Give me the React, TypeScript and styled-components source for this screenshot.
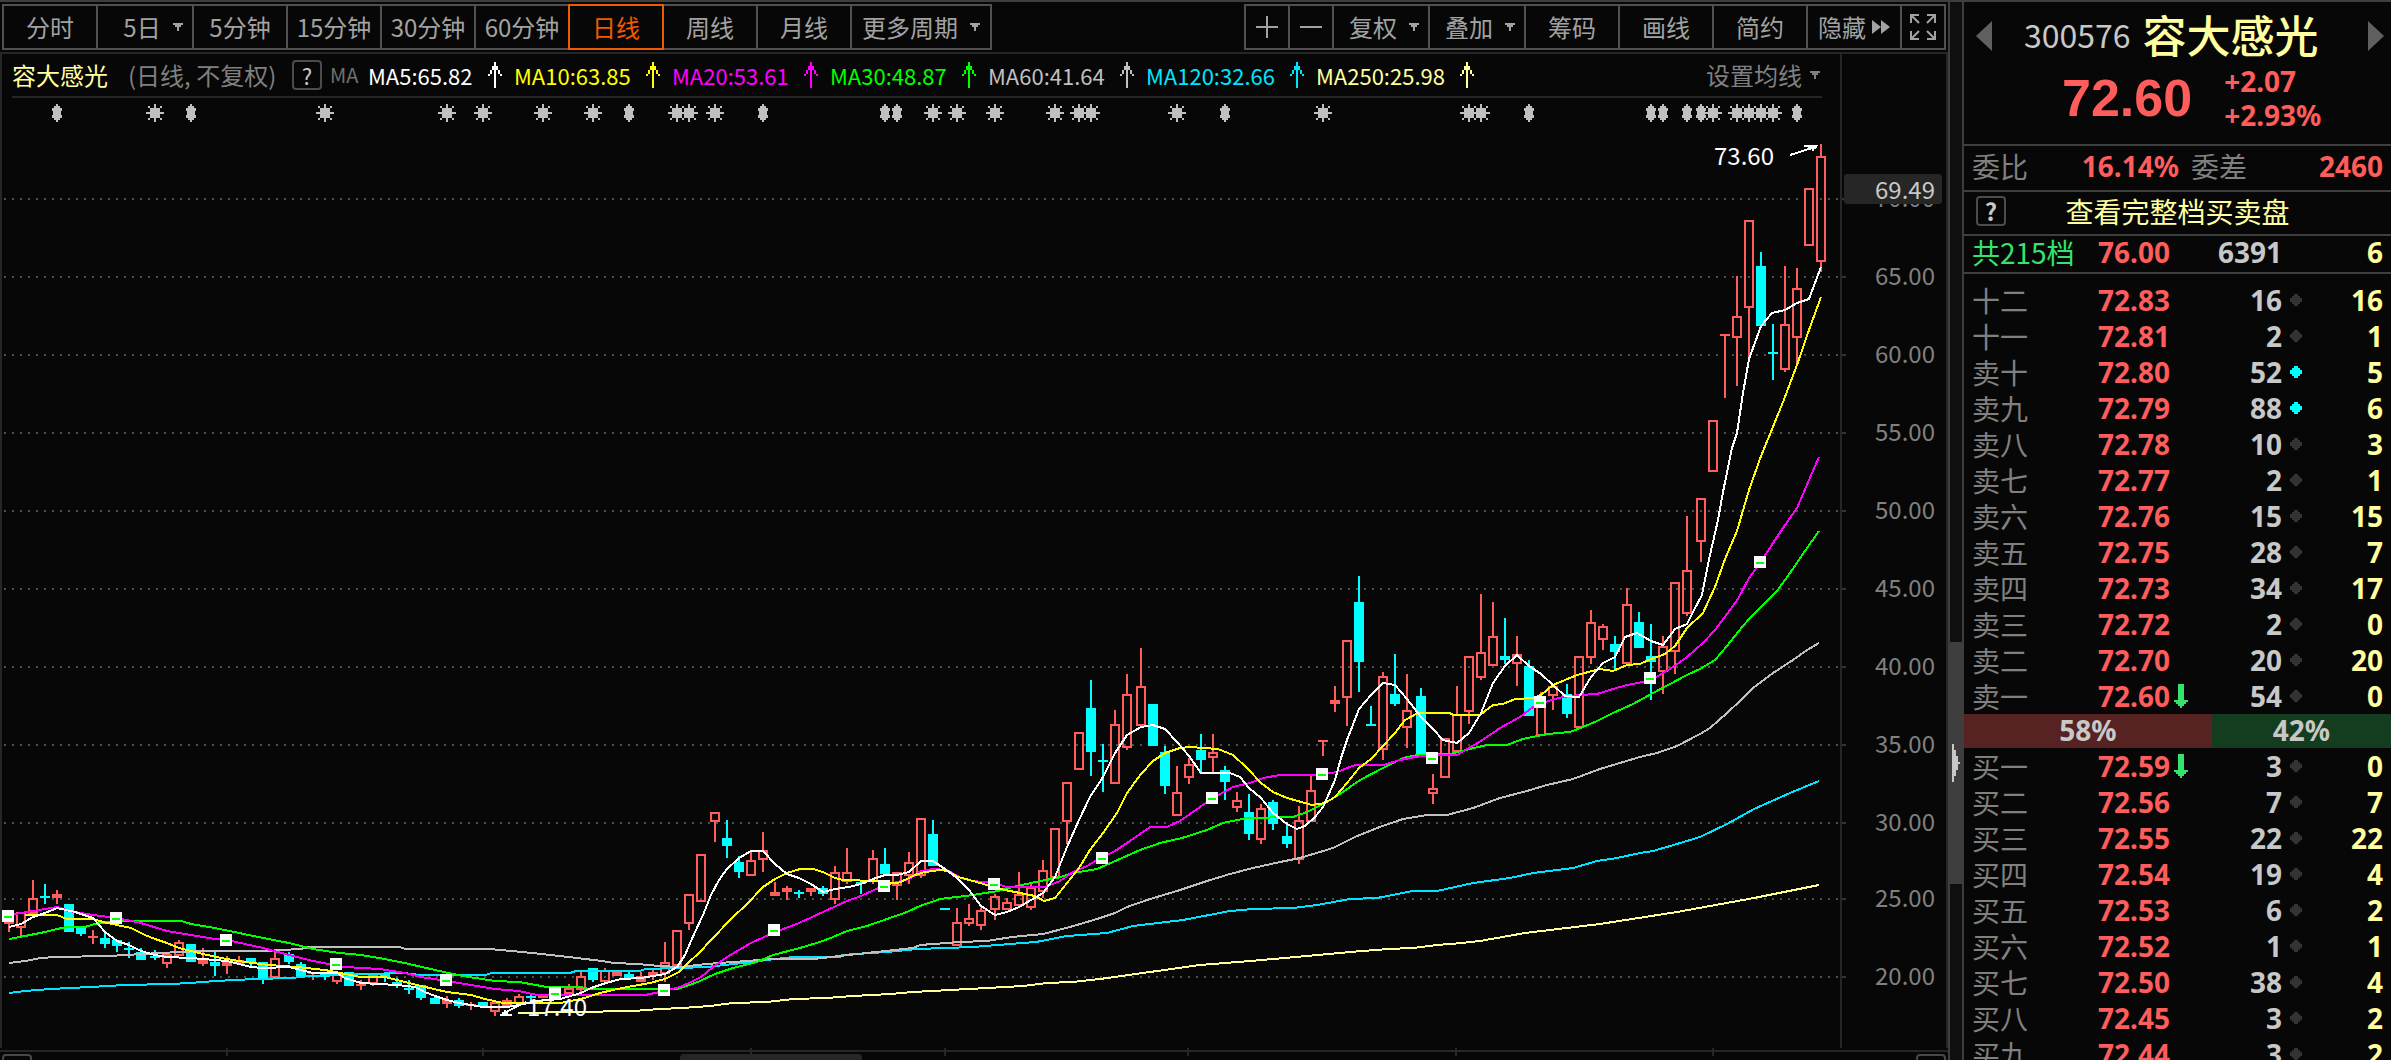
import React from "react";
import styled, { createGlobalStyle } from "styled-components";

const color = {
  bg: "#070707",
  line: "#3e3e3e",
  faint: "#262626",
  border: "#505050",
  text: "#a2a2a2",
  muted: "#808080",
  bright: "#c8c8c8",
  accent: "#f05a00",
  red: "#ff5c5c",
  green: "#35e36b",
  cyan: "#00ffff",
  pale: "#ffffa0",
};

const GlobalStyle = createGlobalStyle`
  *, *::before, *::after { box-sizing: border-box; }
  body {
    margin: 0;
    background: ${color.bg};
    color: ${color.text};
    font-family: "Noto Sans CJK SC", "Liberation Sans", sans-serif;
    font-size: 24px;
    line-height: 32px;
  }
  button { font: inherit; color: inherit; background: none; padding: 0; margin: 0; border: 0; cursor: pointer; }
  svg { display: block; }
`;

/* ---------- layout ---------- */

const Page = styled.div`
  display: flex;
  height: 100vh;
  overflow: hidden;
  border-top: 2px solid ${color.line};
`;

const ChartColumn = styled.main`
  flex: 1;
  min-width: 0;
  display: flex;
  flex-direction: column;
`;

const Toolbar = styled.nav`
  flex: none;
  display: flex;
  justify-content: space-between;
  padding: 2px 2px;
  border-bottom: 2px solid ${color.faint};
  height: 52px;
`;

const ToolGroup = styled.div`
  display: flex;
`;

const ToolButton = styled.button<{ $w: number; $active?: boolean; $gap?: number; $indent?: number }>`
  position: relative;
  display: flex;
  align-items: center;
  justify-content: center;
  gap: ${(p) => p.$gap ?? 12}px;
  width: ${(p) => p.$w}px;
  height: 46px;
  padding-left: ${(p) => p.$indent ?? 0}px;
  border: 2px solid ${(p) => (p.$active ? color.accent : color.border)};
  color: ${(p) => (p.$active ? color.accent : color.text)};
  z-index: ${(p) => (p.$active ? 1 : 0)};
  white-space: nowrap;
  & + & {
    margin-left: -2px;
  }
`;

const Legend = styled.header`
  flex: none;
  display: flex;
  height: 44px;
  border-left: 2px solid ${color.faint};
  border-right: 2px solid ${color.faint};
`;

const LegendMain = styled.div`
  flex: 1;
  display: flex;
  align-items: center;
  margin: 0 18px 0 10px;
  border-bottom: 2px solid ${color.faint};
  white-space: nowrap;
`;

const LegendAxis = styled.div`
  width: 106px;
  border-left: 2px solid ${color.faint};
`;

const StockName = styled.strong`
  font-weight: 400;
  color: ${color.pale};
`;

const Period = styled.span`
  width: 164px;
  margin-left: 20px;
  color: ${color.muted};
`;

const HelpButton = styled.button<{ $bold?: boolean }>`
  width: 30px;
  height: 30px;
  border: 2px solid #4c4c4c;
  border-radius: 4px;
  font-size: ${(p) => (p.$bold ? 24 : 22)}px;
  font-weight: ${(p) => (p.$bold ? 700 : 400)};
  line-height: 24px;
  color: ${color.bright};
`;

const MaTitle = styled.span`
  width: 46px;
  padding-left: 8px;
  font-size: 20px;
  color: #707070;
`;

const MaValue = styled.span<{ $color: string; $chars: number }>`
  min-width: ${(p) => p.$chars * 12}px;
  font-size: 22px;
  color: ${(p) => p.$color};
`;

const MaArrow = styled.svg`
  flex: none;
  width: 14px;
  height: 26px;
  margin: 0 12px;
`;

const MaSettings = styled.button`
  display: flex;
  align-items: center;
  gap: 8px;
  margin: 0 2px 0 auto;
  color: ${color.muted};
`;

const ChartSvg = styled.svg`
  flex: none;
  width: 100%;
  height: auto;
  font-size: 24px;
`;

const ScrollTrack = styled.div`
  flex: none;
  display: grid;
  grid-template-columns: 30px 648fr 182px 1054fr 30px;
  height: 30px;
  margin: -2px 2px 0;
`;

const ScrollEnd = styled.button<{ $column: number }>`
  grid-column: ${(p) => p.$column};
  border: 2px solid #484848;
  border-radius: 4px;
`;

const ScrollThumb = styled.div`
  grid-column: 3;
  background: ${color.faint};
  border-radius: 4px;
`;

const Splitter = styled.div`
  flex: none;
  width: 16px;
  display: flex;
  flex-direction: column;
  background: #0f0f0f;
  border: solid ${color.line};
  border-width: 0 2px;
  &::before {
    content: "";
    flex: 640;
  }
  &::after {
    content: "";
    flex: 176;
  }
`;

const SplitHandle = styled.button`
  height: 242px;
  display: flex;
  align-items: center;
  justify-content: center;
  background: ${color.line};
`;

/* ---------- quote panel ---------- */

const QuotePanel = styled.aside`
  flex: none;
  width: 427px;
  overflow: hidden;
`;

const QuoteHead = styled.header`
  height: 144px;
  padding: 0 7px 0 12px;
  border-bottom: 2px solid ${color.line};
`;

const TitleRow = styled.div`
  display: flex;
  align-items: center;
  height: 68px;
`;

const Code = styled.span`
  margin: 0 12px 0 32px;
  padding-bottom: 4px;
  font-size: 32px;
  color: ${color.bright};
`;

const BigName = styled.h1`
  margin: 0 auto 0 0;
  padding-bottom: 4px;
  font-size: 44px;
  line-height: 60px;
  font-weight: 500;
  color: ${color.pale};
`;

const PriceRow = styled.div`
  display: flex;
  align-items: center;
  gap: 32px;
  height: 56px;
  padding-left: 86px;
  color: ${color.red};
`;

const BigPrice = styled.span`
  font: 700 52px/56px "Liberation Sans", sans-serif;
`;

const numeric = `font-family: "Noto Sans", "Noto Sans CJK SC", sans-serif; font-size: 28px; font-weight: 700;`;

const Changes = styled.div`
  ${numeric}
  line-height: 34px;
`;

const InfoRow = styled.div<{ $h: number }>`
  display: flex;
  align-items: center;
  height: ${(p) => p.$h}px;
  padding: 0 8px 4px 8px;
  border-bottom: 2px solid ${color.line};
  font-size: 28px;
`;

const HelpRow = styled(InfoRow)`
  padding-left: 12px;
`;

const InfoLabel = styled.span`
  color: ${color.muted};
`;

const InfoValue = styled.span<{ $w?: number }>`
  ${numeric}
  ${(p) => (p.$w ? `width: ${p.$w}px; margin-right: 12px;` : "margin-left: auto;")}
  text-align: right;
  color: ${color.red};
`;

const FullBookLink = styled.a`
  flex: 1;
  margin-right: 34px;
  text-align: center;
  text-decoration: none;
  color: ${color.pale};
`;

const Level = styled.th<{ $color?: string }>`
  padding: 0 0 0 8px;
  text-align: left;
  font-size: 28px;
  font-weight: 400;
  line-height: 36px;
  white-space: nowrap;
  color: ${(p) => p.$color ?? color.muted};
`;

const Num = styled.td<{ $color: string; $pad?: number }>`
  ${numeric}
  padding: 0 ${(p) => p.$pad ?? 0}px 0 0;
  line-height: 36px;
  text-align: right;
  color: ${(p) => p.$color};
`;

const Book = styled.table<{ $pad?: number }>`
  width: 100%;
  table-layout: fixed;
  border-collapse: collapse;
  margin-top: ${(p) => p.$pad ?? 0}px;
`;

const BookSummary = styled.div`
  height: 38px;
  border-bottom: 2px solid ${color.line};
  ${Level}, ${Num} {
    padding-bottom: 4px;
    line-height: 32px;
  }
`;

const BookRow = styled.tr`
  height: 36px;
`;

const IconCell = styled.td`
  padding: 0;
  & > svg {
    margin: 0 auto;
  }
`;

const RatioBar = styled.div`
  display: flex;
  height: 34px;
  ${numeric}
  line-height: 32px;
  text-align: center;
  color: ${color.bright};
`;

const Ratio = styled.div<{ $bg: string; $share: number }>`
  flex: ${(p) => p.$share} 0 0;
  background: ${(p) => p.$bg};
`;

/* ---------- icons ---------- */

const Caret = () => (
  <svg width="10" height="8" viewBox="0 0 10 8" shapeRendering="crispEdges" fill="currentColor">
    <path d="M0 0h10v2h-2v2h-2v4h-2v-4h-2v-2h-2z" />
  </svg>
);

const Plus = () => (
  <svg width="22" height="22" viewBox="0 0 22 22" fill="currentColor">
    <path d="M10 0h2v10h10v2h-10v10h-2v-10h-10v-2h10z" />
  </svg>
);

const Minus = () => (
  <svg width="22" height="2" viewBox="0 0 22 2" fill="currentColor">
    <path d="M0 0h22v2h-22z" />
  </svg>
);

const Forward = () => (
  <svg width="18" height="14" viewBox="0 0 18 14" fill="currentColor">
    <path d="M0 0l9 7l-9 7zM9 0l9 7l-9 7z" />
  </svg>
);

const Expand = () => (
  <svg width="26" height="26" viewBox="0 0 26 26" fill="none" stroke="currentColor" strokeWidth="2">
    <path d="M1 9V1H9M2 2L9 9M17 1H25V9M24 2L17 9M1 17V25H9M2 24L9 17M25 17V25H17M24 24L17 17" />
  </svg>
);

const UpArrow = ({ c }: { c: string }) => (
  <MaArrow viewBox="0 0 14 26" shapeRendering="crispEdges" fill={c}>
    <path d="M6 0h2v4h2v4h2v4h2v2h-2v-2h-2v-4h-2v18h-2v-18h-2v4h-2v2h-2v-2h2v-4h2v-4h2z" />
  </MaArrow>
);

const DownArrow = () => (
  <svg width="14" height="24" viewBox="0 0 14 24" shapeRendering="crispEdges" fill={color.green}>
    <path d="M4 0h6v16h4v2h-2v2h-2v2h-2v2h-2v-2h-2v-2h-2v-2h-2v-2h4z" />
  </svg>
);

const Dot = ({ on }: { on?: boolean }) => (
  <svg width="12" height="12" viewBox="0 0 12 12" shapeRendering="crispEdges" fill={on ? color.cyan : "#333333"}>
    <path d="M4 0h4v2h2v2h2v4h-2v2h-2v2h-4v-2h-2v-2h-2v-4h2v-2h2z" />
  </svg>
);

const Triangle = ({ left }: { left?: boolean }) => (
  <svg width="16" height="30" viewBox="0 0 16 30" fill="#606060">
    <path d={left ? "M16 0v30l-16-15z" : "M0 0v30l16-15z"} />
  </svg>
);

/* ---------- chart data ---------- */

// kind: u = hollow rising, r = solid rising, d = falling
// [x, kind, high, body top, body bottom, low]
type Candle = [number, "u" | "r" | "d", number, number, number, number];

const candles: Candle[] = [
  [9, "r", 910, 920, 924, 932], [21, "u", 912, 912, 928, 936], [33, "u", 880, 898, 914, 914],
  [45, "d", 884, 896, 898, 904], [57, "r", 890, 894, 898, 904], [69, "d", 904, 904, 932, 932],
  [81, "d", 928, 928, 934, 936], [93, "r", 930, 936, 938, 944], [105, "d", 932, 938, 944, 948],
  [117, "d", 940, 940, 946, 952], [129, "d", 942, 948, 950, 958], [141, "d", 948, 952, 960, 960],
  [155, "d", 950, 956, 958, 960], [167, "u", 954, 954, 964, 968], [179, "u", 940, 942, 956, 956],
  [191, "d", 944, 944, 962, 962], [203, "r", 948, 960, 964, 966], [215, "d", 952, 962, 966, 976],
  [227, "r", 956, 962, 966, 974], [239, "r", 956, 960, 964, 964], [251, "d", 958, 958, 962, 966],
  [263, "d", 962, 962, 978, 984], [275, "u", 952, 958, 978, 978], [289, "d", 952, 954, 962, 964],
  [301, "d", 962, 964, 976, 976], [313, "r", 972, 972, 974, 980], [325, "d", 972, 972, 977, 980],
  [337, "u", 972, 974, 982, 984], [349, "d", 972, 972, 986, 986], [361, "r", 980, 984, 986, 990],
  [373, "u", 974, 974, 984, 986], [385, "d", 972, 974, 977, 982], [397, "d", 978, 982, 985, 988],
  [409, "d", 980, 988, 990, 994], [421, "d", 985, 985, 998, 1000], [435, "d", 996, 998, 1004, 1004],
  [447, "r", 996, 1000, 1004, 1008], [459, "d", 998, 1000, 1006, 1008], [471, "r", 1002, 1004, 1006, 1010],
  [483, "d", 1002, 1002, 1006, 1006], [495, "u", 1002, 1002, 1012, 1016], [507, "r", 998, 1000, 1006, 1006],
  [519, "u", 994, 996, 1004, 1004], [531, "d", 994, 996, 998, 1000], [543, "r", 995, 995, 998, 998],
  [555, "d", 988, 988, 998, 998], [569, "u", 984, 988, 994, 994], [581, "u", 972, 976, 990, 992],
  [593, "d", 968, 968, 980, 982], [605, "u", 968, 970, 982, 982], [617, "r", 972, 972, 976, 976],
  [629, "d", 972, 974, 978, 978], [641, "r", 972, 976, 982, 982], [653, "r", 970, 972, 976, 980],
  [665, "u", 942, 962, 974, 982], [677, "u", 930, 930, 966, 966], [689, "u", 894, 894, 924, 930],
  [701, "u", 854, 854, 902, 902], [715, "u", 812, 812, 822, 842], [727, "d", 820, 838, 846, 858],
  [739, "d", 856, 862, 872, 878], [751, "u", 852, 860, 876, 876], [763, "u", 832, 850, 860, 872],
  [775, "r", 882, 892, 896, 896], [787, "r", 886, 888, 892, 900], [799, "d", 890, 892, 894, 898],
  [811, "r", 888, 888, 892, 896], [823, "d", 886, 888, 894, 896], [835, "u", 866, 872, 900, 904],
  [847, "u", 848, 872, 882, 884], [861, "d", 882, 882, 884, 894], [873, "u", 850, 858, 882, 884],
  [885, "d", 848, 864, 874, 874], [897, "u", 872, 872, 886, 900], [909, "u", 852, 862, 876, 884],
  [921, "u", 818, 818, 876, 878], [933, "d", 820, 834, 866, 866], [945, "d", 908, 908, 910, 910],
  [957, "u", 908, 922, 946, 946], [969, "u", 904, 918, 924, 926], [981, "u", 908, 910, 926, 930],
  [995, "u", 894, 896, 910, 920], [1007, "u", 898, 902, 910, 910], [1019, "u", 872, 894, 906, 906],
  [1031, "u", 884, 887, 908, 910], [1043, "u", 860, 870, 892, 898], [1055, "u", 828, 828, 878, 878],
  [1067, "u", 782, 782, 822, 844], [1079, "u", 732, 732, 770, 770], [1091, "d", 680, 708, 752, 776],
  [1103, "d", 744, 760, 762, 792], [1115, "u", 710, 724, 784, 784], [1127, "u", 674, 694, 748, 750],
  [1141, "u", 648, 686, 726, 726], [1153, "d", 704, 704, 746, 746], [1165, "d", 746, 752, 786, 794],
  [1177, "u", 766, 792, 816, 816], [1189, "u", 758, 764, 778, 784], [1201, "d", 734, 750, 760, 772],
  [1213, "u", 734, 752, 758, 772], [1225, "d", 766, 770, 782, 800], [1237, "u", 792, 800, 808, 812],
  [1249, "d", 794, 812, 834, 840], [1261, "u", 804, 808, 840, 844], [1273, "d", 800, 802, 824, 830],
  [1287, "d", 822, 836, 844, 848], [1299, "u", 806, 820, 860, 864], [1311, "u", 776, 790, 822, 822],
  [1323, "r", 740, 740, 742, 756], [1335, "r", 686, 700, 704, 712], [1347, "u", 640, 640, 698, 726],
  [1359, "d", 576, 602, 662, 692], [1371, "d", 706, 724, 726, 726], [1383, "u", 672, 676, 750, 760],
  [1395, "d", 654, 694, 704, 706], [1407, "u", 674, 710, 728, 748], [1421, "d", 688, 696, 754, 754],
  [1433, "u", 774, 788, 794, 804], [1445, "u", 738, 738, 778, 778], [1457, "u", 686, 714, 752, 752],
  [1469, "u", 656, 656, 712, 724], [1481, "u", 594, 652, 678, 680], [1493, "u", 602, 636, 666, 666],
  [1505, "d", 618, 656, 660, 664], [1517, "u", 636, 654, 664, 686], [1529, "d", 660, 666, 716, 716],
  [1541, "u", 692, 698, 736, 736], [1553, "u", 686, 686, 696, 710], [1567, "d", 684, 694, 714, 718],
  [1579, "u", 656, 656, 728, 728], [1591, "u", 610, 622, 658, 664], [1603, "u", 624, 626, 640, 650],
  [1615, "d", 636, 644, 652, 670], [1627, "u", 588, 604, 664, 664], [1639, "d", 612, 622, 648, 648],
  [1651, "d", 624, 656, 662, 700], [1663, "u", 636, 646, 672, 694], [1675, "u", 582, 582, 652, 674],
  [1687, "u", 516, 570, 614, 616], [1701, "u", 498, 498, 542, 562], [1713, "u", 420, 420, 472, 472],
  [1725, "r", 334, 334, 336, 398], [1737, "u", 276, 316, 338, 386], [1749, "u", 220, 220, 308, 358],
  [1761, "d", 252, 266, 326, 326], [1773, "d", 324, 352, 354, 380], [1785, "u", 266, 324, 370, 372],
  [1797, "u", 268, 288, 338, 364], [1809, "u", 188, 188, 246, 246], [1821, "u", 144, 156, 262, 272],
];

const averages: { color: string; points: string }[] = [
  {
    color: "#ffff9b",
    points:
      "518,1013 574,1012 633,1011 660,1009 682,1008 710,1006 733,1003 767,1002 793,999 827,998 853,996 890,994 913,992 950,990 987,988 1023,986 1047,983 1072,982 1100,979 1150,972 1200,965 1250,961 1296,957 1350,952 1388,949 1413,948 1437,945 1462,943 1480,941 1525,933 1600,924 1677,912 1754,898 1819,885",
  },
  {
    color: "#00e5ff",
    points:
      "9,993 25,991 50,989 90,987 125,985 170,984 190,983 215,981 255,979 292,978 310,976 365,974 404,973 420,975 485,975 492,973 570,973 576,971 640,971 645,969 680,968 707,967 743,963 767,960 793,957 840,957 842,955 887,952 917,949 973,947 1010,944 1036,942 1067,936 1107,933 1133,926 1183,920 1230,911 1253,909 1293,908 1317,905 1350,899 1377,898 1413,891 1437,891 1473,883 1510,878 1533,873 1573,868 1597,861 1617,858 1640,853 1653,851 1677,844 1700,837 1727,824 1754,809 1790,793 1819,781",
  },
  {
    color: "#c0c0c0",
    points:
      "9,963 25,961 41,958 55,957 109,956 160,953 200,951 265,951 300,949 310,947 400,947 405,949 489,949 522,952 551,955 577,958 602,961 614,963 637,964 660,966 680,967 707,964 733,962 773,959 813,959 867,953 913,948 920,945 960,942 987,941 1012,937 1043,934 1070,927 1097,919 1115,913 1127,907 1150,899 1177,891 1207,881 1230,874 1253,868 1280,862 1300,858 1333,848 1355,837 1377,828 1403,819 1427,815 1447,815 1473,808 1500,798 1527,791 1547,785 1573,779 1600,769 1620,763 1640,757 1657,753 1677,746 1700,734 1710,728 1727,713 1740,701 1753,688 1773,673 1793,660 1807,650 1819,643",
  },
  {
    color: "#00ff00",
    points:
      "9,939 25,936 45,932 57,929 67,927 85,927 95,924 109,922 125,921 181,921 191,924 215,928 239,933 263,938 289,943 313,949 339,953 361,955 385,959 409,964 435,970 453,974 469,977 495,981 519,982 547,987 581,987 589,989 677,989 687,986 700,981 715,974 733,968 757,962 773,955 800,948 820,942 833,937 847,931 867,926 887,919 907,912 920,906 940,899 973,895 998,891 1013,887 1040,881 1057,878 1073,873 1097,869 1113,862 1140,850 1160,843 1182,838 1207,830 1223,823 1247,818 1293,817 1307,812 1325,803 1340,794 1360,780 1383,768 1403,758 1417,755 1450,754 1470,749 1487,745 1507,745 1523,739 1547,734 1570,732 1583,727 1597,721 1613,713 1633,704 1653,693 1670,684 1687,675 1700,669 1715,660 1727,646 1738,632 1749,619 1763,605 1777,591 1790,573 1805,551 1819,531",
  },
  {
    color: "#ff00ff",
    points:
      "9,915 33,911 57,907 69,911 93,915 117,918 141,923 167,931 191,935 215,939 227,940 245,944 263,948 289,955 313,961 345,967 380,969 405,973 421,977 447,981 471,985 495,989 519,991 537,995 645,995 660,992 680,987 689,983 701,977 713,967 727,957 751,943 773,933 799,923 823,912 847,901 861,896 885,885 909,879 921,871 933,869 947,870 961,878 973,881 993,883 1007,887 1045,887 1060,881 1073,872 1087,866 1097,860 1115,851 1130,841 1150,827 1167,827 1180,821 1200,807 1213,798 1233,787 1250,783 1263,778 1280,775 1317,775 1337,772 1355,765 1383,765 1400,760 1415,757 1430,755 1457,755 1467,749 1481,741 1500,728 1520,717 1533,707 1548,701 1563,697 1580,695 1597,694 1613,689 1627,685 1643,682 1658,676 1673,667 1687,657 1703,643 1715,630 1727,614 1738,599 1749,578 1760,563 1773,543 1785,525 1797,508 1809,480 1819,457",
  },
  {
    color: "#ffff00",
    points:
      "25,915 57,915 67,919 93,919 103,922 117,925 131,928 145,935 155,939 167,943 179,948 191,951 203,954 221,958 245,962 269,965 297,967 325,970 345,974 361,977 385,977 397,980 421,986 447,992 471,995 485,999 503,1003 560,1003 581,999 600,993 622,988 650,983 665,979 679,972 687,964 700,952 710,941 733,917 747,904 763,887 775,879 787,873 800,869 813,869 823,872 835,878 843,880 877,881 883,884 898,883 907,879 915,875 925,872 940,870 948,871 958,877 973,881 987,885 1005,890 1020,893 1035,896 1044,901 1055,898 1067,883 1079,868 1090,850 1103,833 1117,813 1127,793 1141,774 1153,761 1165,753 1180,748 1190,747 1218,749 1233,755 1247,768 1261,783 1273,792 1287,798 1312,805 1325,803 1335,797 1347,783 1359,768 1371,759 1383,746 1395,733 1405,720 1418,713 1450,713 1453,715 1480,715 1493,705 1503,704 1515,699 1533,698 1541,695 1553,685 1577,675 1600,669 1613,671 1627,665 1640,664 1651,659 1665,654 1675,646 1687,628 1703,613 1715,587 1725,559 1737,531 1749,490 1761,456 1773,427 1785,397 1797,365 1809,330 1821,297",
  },
  {
    color: "#ffffff",
    points:
      "9,927 21,924 33,917 45,913 57,908 75,912 93,918 105,932 117,941 129,945 141,951 155,955 167,957 191,958 203,959 227,961 239,964 251,967 263,968 289,967 301,970 313,973 337,973 345,978 361,983 397,985 415,987 425,992 435,996 447,1000 459,1003 471,1005 483,1007 507,1007 519,1005 537,1001 560,999 581,993 591,988 606,983 621,979 641,978 665,974 677,967 685,955 695,932 703,915 711,895 719,880 727,869 739,858 751,851 763,851 775,864 787,874 799,878 811,884 823,892 835,889 849,887 861,884 873,879 885,875 897,875 909,872 921,861 933,861 945,869 957,878 969,890 981,906 995,915 1007,912 1019,907 1031,900 1043,893 1055,877 1067,847 1079,820 1090,797 1103,777 1115,753 1127,735 1141,727 1153,725 1165,729 1177,742 1189,756 1201,773 1230,773 1240,777 1249,788 1261,798 1273,813 1287,824 1297,829 1305,826 1315,817 1323,807 1335,780 1341,758 1347,740 1359,709 1371,695 1383,683 1395,685 1407,699 1421,717 1433,729 1443,740 1457,743 1469,733 1481,713 1493,683 1505,666 1517,655 1529,666 1541,674 1553,685 1565,696 1579,697 1591,677 1603,663 1615,657 1625,637 1637,633 1651,641 1663,645 1675,629 1687,624 1693,612 1702,595 1710,555 1718,520 1723,492 1732,448 1737,433 1743,393 1749,359 1761,326 1772,313 1785,310 1797,303 1809,299 1821,267",
  },
];

const handles: [number, number][] = [
  [8, 916], [116, 918], [226, 940], [336, 964], [446, 980], [555, 993], [664, 990], [774, 930], [884, 886],
  [994, 884], [1102, 858], [1212, 798], [1322, 774], [1432, 758], [1540, 702], [1650, 678], [1760, 562],
];

const stars = [
  155, 325, 447, 483, 543, 593, 677, 689, 715, 933, 957, 995, 1055, 1079, 1091, 1177, 1323, 1469, 1481, 1713, 1737,
  1749, 1761, 1773,
];
const notices = [57, 191, 629, 763, 885, 897, 1225, 1529, 1651, 1663, 1687, 1701, 1797];

const gridLines: [number, string][] = [
  [199, "70.00"], [277, "65.00"], [355, "60.00"], [433, "55.00"], [511, "50.00"], [589, "45.00"],
  [667, "40.00"], [745, "35.00"], [823, "30.00"], [899, "25.00"], [977, "20.00"],
];

const monthTicks = [227, 483, 751, 945, 1188, 1456, 1713];

const CandleShape = ({ c: [x, kind, high, top, bottom, low] }: { c: Candle }) => {
  const tint = kind === "d" ? color.cyan : color.red;
  return (
    <g fill={tint}>
      {high < top && <rect x={x - 1} y={high} width="2" height={top - high} />}
      {kind === "u" ? (
        <rect x={x - 4} y={top + 1} width="8" height={bottom - top - 2} fill="none" stroke={tint} strokeWidth="2" />
      ) : (
        <rect x={x - 5} y={top} width="10" height={bottom - top} />
      )}
      {low > bottom && <rect x={x - 1} y={bottom} width="2" height={low - bottom} />}
    </g>
  );
};

const KLineChart = () => (
  <ChartSvg viewBox="0 98 1948 958" role="img" aria-label="日线">
    <g shapeRendering="crispEdges">
      <path d="M1 98V1048M1841 98V1048M1947 98V1048M0 1051H1948" stroke={color.faint} strokeWidth="2" />
      {monthTicks.map((x) => (
        <rect key={x} x={x - 1} y="1048" width="2" height="8" fill={color.faint} />
      ))}
      {gridLines.map(([y]) => (
        <g key={y}>
          <path d={`M4 ${y}H1840`} stroke="#4e4e4e" strokeWidth="2" strokeDasharray="2 6" />
          <rect x="1842" y={y - 1} width="4" height="2" fill="#333333" />
        </g>
      ))}
      <g fill="#c0c0c0">
        {stars.map((x) => (
          <path
            key={x}
            d={`M${x - 1} 104h2v18h-2zM${x - 9} 112h18v2h-18zM${x - 5} 108h10v10h-10zM${x - 7} 106h2v2h-2zM${x + 5} 106h2v2h-2zM${x - 7} 118h2v2h-2zM${x + 5} 118h2v2h-2z`}
          />
        ))}
        {notices.map((x) => (
          <path
            key={x}
            d={`M${x - 1} 104h2v2h2v2h2v3h-1v4h1v3h-2v2h-2v2h-2v-2h-2v-2h-2v-3h1v-4h-1v-3h2v-2h2z`}
          />
        ))}
      </g>
      {candles.map((c) => (
        <CandleShape key={c[0]} c={c} />
      ))}
      {averages.map((a) => (
        <polyline key={a.color} points={a.points} fill="none" stroke={a.color} strokeWidth="2" />
      ))}
      {handles.map(([x, y]) => (
        <g key={x}>
          <rect x={x - 6} y={y - 6} width="12" height="12" fill="#fafafa" />
          <path d={`M${x - 4} ${y + 1}h8`} stroke="#00ff00" strokeWidth="2" />
        </g>
      ))}
      <path d="M500 1016h12v-2h-4v-2h-2v-2h-2v2h-2v2h-2zM1818 145h-14v2h4v2h4v2h2v-2h2z" fill="#ffffff" />
      <path d="M506 1012L526 1002M1790 155L1812 148" stroke="#ffffff" strokeWidth="2" />
    </g>
    <g fill="#ffffff">
      <text x="527" y="1016">
        17.40
      </text>
      <text x="1714" y="165">
        73.60
      </text>
    </g>
    <g fill={color.muted} textAnchor="end">
      {gridLines.map(([y, label]) => (
        <text key={label} x="1935" y={y + 8}>
          {label}
        </text>
      ))}
      <rect x="1844" y="174" width="98" height="30" rx="3" fill={color.faint} />
      <text x="1935" y="199" fill={color.bright}>
        69.49
      </text>
    </g>
  </ChartSvg>
);

/* ---------- page data ---------- */

const movingAverages: [string, string][] = [
  ["MA5:65.82", "#ffffff"],
  ["MA10:63.85", "#ffff00"],
  ["MA20:53.61", "#ff00ff"],
  ["MA30:48.87", "#00ff00"],
  ["MA60:41.64", "#c0c0c0"],
  ["MA120:32.66", "#00e5ff"],
  ["MA250:25.98", "#ffff9b"],
];

type Order = { level: string; price: string; qty: number; last: number; down?: boolean; on?: boolean };

const sells: Order[] = [
  { level: "十二", price: "72.83", qty: 16, last: 16 },
  { level: "十一", price: "72.81", qty: 2, last: 1 },
  { level: "卖十", price: "72.80", qty: 52, last: 5, on: true },
  { level: "卖九", price: "72.79", qty: 88, last: 6, on: true },
  { level: "卖八", price: "72.78", qty: 10, last: 3 },
  { level: "卖七", price: "72.77", qty: 2, last: 1 },
  { level: "卖六", price: "72.76", qty: 15, last: 15 },
  { level: "卖五", price: "72.75", qty: 28, last: 7 },
  { level: "卖四", price: "72.73", qty: 34, last: 17 },
  { level: "卖三", price: "72.72", qty: 2, last: 0 },
  { level: "卖二", price: "72.70", qty: 20, last: 20 },
  { level: "卖一", price: "72.60", qty: 54, last: 0, down: true },
];

const buys: Order[] = [
  { level: "买一", price: "72.59", qty: 3, last: 0, down: true },
  { level: "买二", price: "72.56", qty: 7, last: 7 },
  { level: "买三", price: "72.55", qty: 22, last: 22 },
  { level: "买四", price: "72.54", qty: 19, last: 4 },
  { level: "买五", price: "72.53", qty: 6, last: 2 },
  { level: "买六", price: "72.52", qty: 1, last: 1 },
  { level: "买七", price: "72.50", qty: 38, last: 4 },
  { level: "买八", price: "72.45", qty: 3, last: 2 },
  { level: "买九", price: "72.44", qty: 3, last: 2 },
];

const BookColumns = () => (
  <colgroup>
    <col width="112" />
    <col width="94" />
    <col width="22" />
    <col width="90" />
    <col width="28" />
    <col />
  </colgroup>
);

const OrderRows = ({ orders }: { orders: Order[] }) => (
  <tbody>
    {orders.map((o) => (
      <BookRow key={o.level}>
        <Level scope="row">{o.level}</Level>
        <Num $color={color.red}>{o.price}</Num>
        <IconCell>{o.down && <DownArrow />}</IconCell>
        <Num $color={color.bright}>{o.qty}</Num>
        <IconCell>
          <Dot on={o.on} />
        </IconCell>
        <Num $color={color.pale} $pad={8}>
          {o.last}
        </Num>
      </BookRow>
    ))}
  </tbody>
);

export default function App() {
  return (
    <>
      <GlobalStyle />
      <Page>
        <ChartColumn>
          <Toolbar>
            <ToolGroup>
              <ToolButton $w={96}>分时</ToolButton>
              <ToolButton $w={98} $indent={16}>
                5日
                <Caret />
              </ToolButton>
              <ToolButton $w={96}>5分钟</ToolButton>
              <ToolButton $w={96}>15分钟</ToolButton>
              <ToolButton $w={96}>30分钟</ToolButton>
              <ToolButton $w={96}>60分钟</ToolButton>
              <ToolButton $w={96} $active>
                日线
              </ToolButton>
              <ToolButton $w={96}>周线</ToolButton>
              <ToolButton $w={96}>月线</ToolButton>
              <ToolButton $w={142}>
                更多周期
                <Caret />
              </ToolButton>
            </ToolGroup>
            <ToolGroup>
              <ToolButton $w={46} aria-label="放大">
                <Plus />
              </ToolButton>
              <ToolButton $w={46} aria-label="缩小">
                <Minus />
              </ToolButton>
              <ToolButton $w={98} $indent={6}>
                复权
                <Caret />
              </ToolButton>
              <ToolButton $w={98} $indent={6}>
                叠加
                <Caret />
              </ToolButton>
              <ToolButton $w={96}>筹码</ToolButton>
              <ToolButton $w={96}>画线</ToolButton>
              <ToolButton $w={96}>简约</ToolButton>
              <ToolButton $w={96} $gap={6}>
                隐藏
                <Forward />
              </ToolButton>
              <ToolButton $w={46} aria-label="全屏">
                <Expand />
              </ToolButton>
            </ToolGroup>
          </Toolbar>
          <Legend>
            <LegendMain>
              <StockName>容大感光</StockName>
              <Period>(日线, 不复权)</Period>
              <HelpButton>?</HelpButton>
              <MaTitle>MA</MaTitle>
              {movingAverages.map(([text, c]) => (
                <React.Fragment key={text}>
                  <MaValue $color={c} $chars={text.length}>
                    {text}
                  </MaValue>
                  <UpArrow c={c} />
                </React.Fragment>
              ))}
              <MaSettings>
                设置均线
                <Caret />
              </MaSettings>
            </LegendMain>
            <LegendAxis />
          </Legend>
          <KLineChart />
          <ScrollTrack>
            <ScrollEnd $column={1} aria-label="向左" />
            <ScrollThumb />
            <ScrollEnd $column={5} aria-label="向右" />
          </ScrollTrack>
        </ChartColumn>
        <Splitter>
          <SplitHandle aria-label="收起">
            <svg width="8" height="38" viewBox="0 0 8 38" shapeRendering="crispEdges" fill={color.bright}>
              <path d="M0 0h2v6h2v6h2v6h2v2h-2v6h-2v6h-2v6h-2z" />
            </svg>
          </SplitHandle>
        </Splitter>
        <QuotePanel>
          <QuoteHead>
            <TitleRow>
              <button aria-label="上一只">
                <Triangle left />
              </button>
              <Code>300576</Code>
              <BigName>容大感光</BigName>
              <button aria-label="下一只">
                <Triangle />
              </button>
            </TitleRow>
            <PriceRow>
              <BigPrice>72.60</BigPrice>
              <Changes>
                <div>+2.07</div>
                <div>+2.93%</div>
              </Changes>
            </PriceRow>
          </QuoteHead>
          <InfoRow $h={46}>
            <InfoLabel>委比</InfoLabel>
            <InfoValue $w={151}>16.14%</InfoValue>
            <InfoLabel>委差</InfoLabel>
            <InfoValue>2460</InfoValue>
          </InfoRow>
          <HelpRow $h={44}>
            <HelpButton $bold>?</HelpButton>
            <FullBookLink href="#book">查看完整档买卖盘</FullBookLink>
          </HelpRow>
          <BookSummary>
            <Book>
              <BookColumns />
              <tbody>
                <BookRow>
                  <Level scope="row" $color={color.green}>
                    共215档
                  </Level>
                  <Num $color={color.red}>76.00</Num>
                  <td />
                  <Num $color={color.bright}>6391</Num>
                  <td />
                  <Num $color={color.pale} $pad={8}>
                    6
                  </Num>
                </BookRow>
              </tbody>
            </Book>
          </BookSummary>
          <Book $pad={8} id="book">
            <BookColumns />
            <OrderRows orders={sells} />
          </Book>
          <RatioBar>
            <Ratio $bg="#562222" $share={58}>
              58%
            </Ratio>
            <Ratio $bg="#143c1e" $share={42}>
              42%
            </Ratio>
          </RatioBar>
          <Book>
            <BookColumns />
            <OrderRows orders={buys} />
          </Book>
        </QuotePanel>
      </Page>
    </>
  );
}
